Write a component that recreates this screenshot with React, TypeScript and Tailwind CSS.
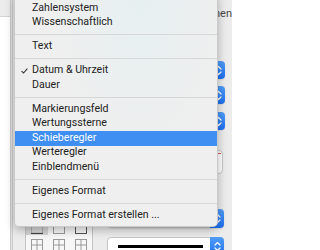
import type { ReactNode } from 'react'

type Entry = { label?: string; checked?: boolean; active?: boolean; sep?: boolean }

const entries: Entry[] = [
  { label: 'Zahlensystem' },
  { label: 'Wissenschaftlich' },
  { sep: true },
  { label: 'Text' },
  { sep: true },
  { label: 'Datum & Uhrzeit', checked: true },
  { label: 'Dauer' },
  { sep: true },
  { label: 'Markierungsfeld' },
  { label: 'Wertungssterne' },
  { label: 'Schieberegler', active: true },
  { label: 'Werteregler' },
  { label: 'Einblendmenü' },
  { sep: true },
  { label: 'Eigenes Format' },
  { sep: true },
  { label: 'Eigenes Format erstellen ...' },
]

function Arrows() {
  return (
    <svg width="7" height="11" viewBox="0 0 7 11" fill="none" stroke="white" strokeWidth="1.3" strokeLinecap="round" strokeLinejoin="round">
      <path d="M1 4 L3.5 1.5 L6 4" />
      <path d="M1 7 L3.5 9.5 L6 7" />
    </svg>
  )
}

function Popup({ className, children }: { className: string; children?: ReactNode }) {
  return (
    <div className={`shrink-0 flex bg-white border border-[#c6c6c6] rounded-[4px] shadow-[0_1px_1px_rgba(0,0,0,0.08)] ${className}`}>
      <div className="flex-1 flex items-center">{children}</div>
      <div className="w-[14px] -my-px -mr-px rounded-r-[4px] bg-gradient-to-b from-[#4f9cf8] to-[#1d6ff0] flex items-center justify-center">
        <Arrows />
      </div>
    </div>
  )
}

function GridIcon({ cross }: { cross?: boolean }) {
  return (
    <svg width="12" height="12" viewBox="0 0 12 12" fill="none" stroke="#9a9a9a" strokeWidth="1">
      <rect x="0.5" y="0.5" width="11" height="11" />
      {cross && <path d="M6 0.5 V11.5 M0.5 6 H11.5" />}
    </svg>
  )
}

function Menu() {
  return (
    <div className="absolute left-[14px] top-[-6px] w-[204px] pt-[6px] pb-[3px] rounded-b-[5px] border border-[#b9b9b9]/70 shadow-[0_3px_10px_rgba(0,0,0,0.28)] bg-[radial-gradient(ellipse_at_62%_0%,#e6f0f1_0%,#efefef_50%)]">
      {entries.map((e, i) =>
        e.sep ? (
          <div key={i} className="h-[9.5px] flex items-center">
            <div className="h-px w-full bg-[#d7d7d7]" />
          </div>
        ) : (
          <div
            key={i}
            className={`h-[14.5px] flex items-center relative pl-[17px] text-[10.6px] leading-none ${
              e.active ? 'bg-[#3f8ef2] text-white' : 'text-[#222222]'
            }`}
          >
            {e.checked && (
              <svg className="absolute left-[6px] top-[4px]" width="7" height="6" viewBox="0 0 7 6" fill="none" stroke="#333" strokeWidth="1.1">
                <path d="M0.6 3.2 L2.5 5 L6.4 0.6" />
              </svg>
            )}
            {e.label}
          </div>
        )
      )}
    </div>
  )
}

export default function App() {
  return (
    <div className="relative w-[232px] h-[250px] overflow-hidden bg-[#ececec] font-['Roboto',sans-serif]">
      <div className="flex h-full">
        <div className="w-[10px] bg-white flex flex-col">
          <div className="shrink-0 h-[17px] bg-[#ececec] border-b border-[#d4d4d4]" />
        </div>
        <div className="w-[3px] bg-[#e2e2e2] border-l border-r border-[#cccccc]" />
        <div className="flex-1 flex flex-col">
          <div className="shrink-0 h-[29px] flex items-center justify-end overflow-hidden text-[11px] text-[#4a4a4a] whitespace-nowrap">
            Anordnen
          </div>
          <div className="shrink-0 flex flex-col items-end pr-[7px]">
            <Popup className="mt-[32px] w-[112px] h-[18px]" />
            <Popup className="mt-[7px] w-[112px] h-[18px]" />
            <Popup className="mt-[8px] w-[112px] h-[18px]" />
            <div className="shrink-0 mt-[20px] mr-[2px] w-[60px] h-[24px] bg-white border border-[#c6c6c6] rounded-[4px] relative">
              <div className="absolute right-[1px] top-[2px] w-[3px] h-px bg-[#d9534f]" />
            </div>
          </div>
          <div className="shrink-0 flex mt-[31px] pl-[12px]">
            <div className="shrink-0 mt-[15px] w-[68px] h-[40px] border border-[#c4c4c4] bg-[#f7f7f7] grid grid-cols-3 content-start">
              <div className="h-[14px] flex items-center justify-center bg-[#d6d6d6]">
                <svg width="12" height="12" viewBox="0 0 12 12" fill="none">
                  <rect x="0.5" y="0.5" width="11" height="11" stroke="#b0b0b0" />
                  <path d="M0 11.5 H12" stroke="#444" strokeWidth="1.2" />
                </svg>
              </div>
              <div className="h-[14px] flex items-center justify-center">
                <GridIcon />
              </div>
              <div className="h-[14px] flex items-center justify-center">
                <svg width="12" height="12" viewBox="0 0 12 12" fill="none">
                  <rect x="0.5" y="0.5" width="11" height="11" stroke="#b0b0b0" />
                  <path d="M0 11.5 H12 M11.5 0 V12 M0.5 0 V12" stroke="#555" />
                </svg>
              </div>
              <div className="h-[16px] flex items-end justify-center">
                <GridIcon cross />
              </div>
              <div className="h-[16px] flex items-end justify-center">
                <GridIcon cross />
              </div>
              <div className="h-[16px] flex items-end justify-center">
                <GridIcon cross />
              </div>
            </div>
            <div className="ml-[14px] w-[117px] flex flex-col">
              <Popup className="mt-[4px] h-[19px]" />
              <Popup className="mt-[9px] h-[19px]">
                <div className="ml-[10px] w-[85px] h-[3px] bg-black" />
              </Popup>
            </div>
          </div>
        </div>
      </div>
      <Menu />
    </div>
  )
}
